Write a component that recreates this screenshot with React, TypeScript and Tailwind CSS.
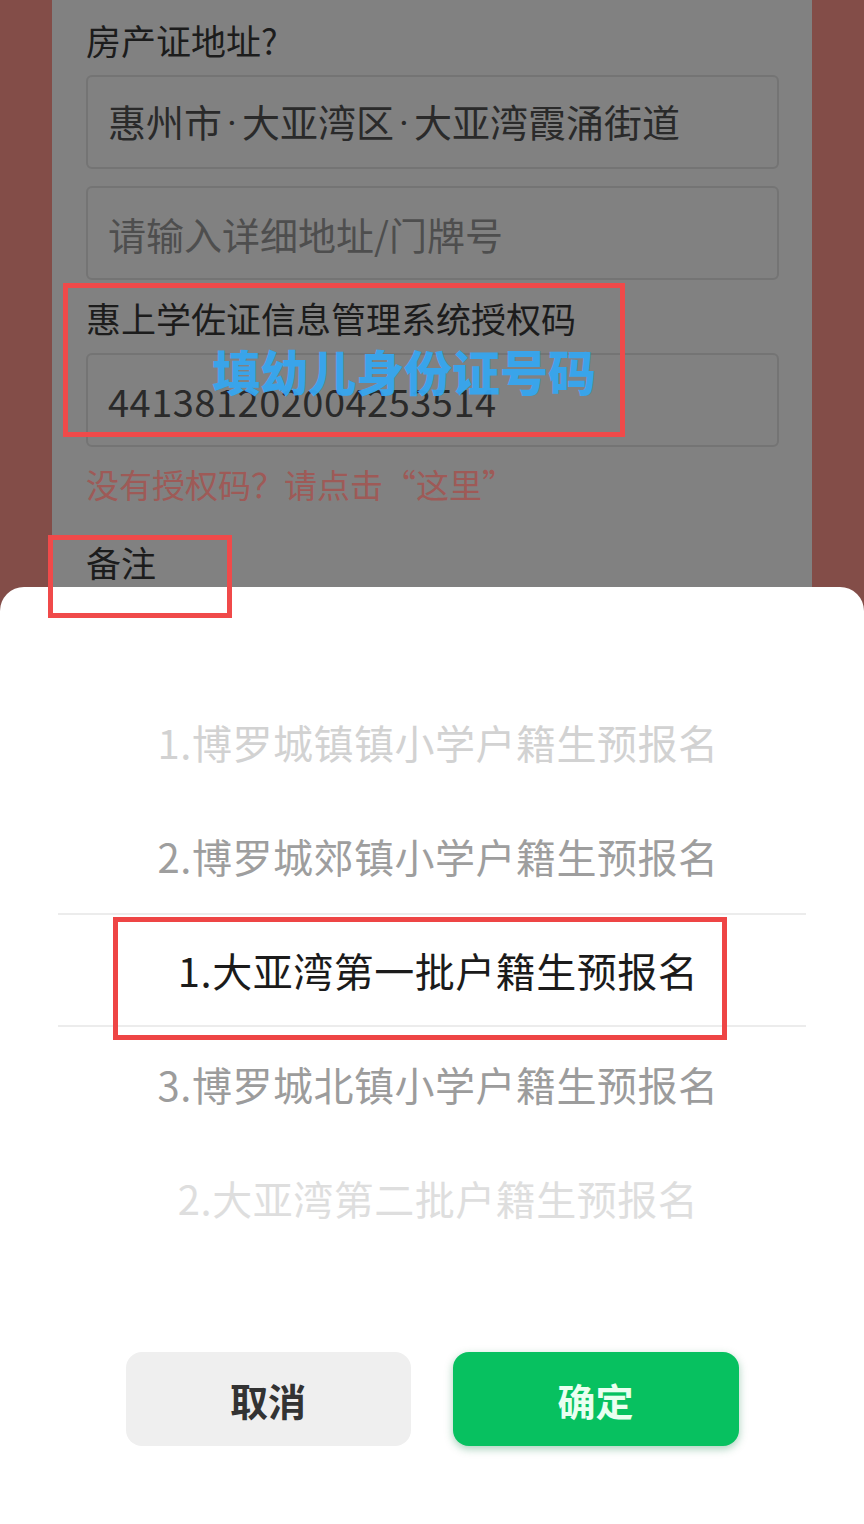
import React from "react";

const F = { fontFamily: '"Noto Sans CJK SC", "Noto Sans", sans-serif' };

function Dot() {
  return (
    <span className="inline-block w-[20px] text-center font-['Roboto',sans-serif]">
      ·
    </span>
  );
}

export default function App() {
  const rows = [
    { t: "1.博罗城镇镇小学户籍生预报名", c: "text-[#d2d2d2]" },
    { t: "2.博罗城郊镇小学户籍生预报名", c: "text-[#9e9e9e]" },
    { t: "1.大亚湾第一批户籍生预报名", c: "text-[#1b1b1b]", sel: true },
    { t: "3.博罗城北镇小学户籍生预报名", c: "text-[#9c9c9c]" },
    { t: "2.大亚湾第二批户籍生预报名", c: "text-[#dedede]" },
  ];
  return (
    <div
      className="relative w-[864px] h-[1524px] overflow-hidden bg-white"
      style={F}
    >
      {/* dimmed form */}
      <div className="flex h-[612px] bg-[#834d48]">
        <div className="w-[52px]" />
        <div className="w-[760px] bg-[#818181] flex flex-col pl-[34px] pr-[33px]">
          <div className="mt-[16px] h-[48px] leading-[48px] text-[35px] text-[#1c1c1c]">
            房产证地址?
          </div>
          <div className="mt-[11px] h-[94px] border-2 border-[#747474] rounded-[6px] flex items-center pl-[20px] text-[38px] text-[#2a2a2a]">
            <span>
              惠州市<Dot />大亚湾区<Dot />大亚湾霞涌街道
            </span>
          </div>
          <div className="mt-[17px] h-[94px] border-2 border-[#747474] rounded-[6px] flex items-center pl-[20px] text-[38px] text-[#4e4e4e]">
            请输入详细地址/门牌号
          </div>
          <div className="mt-[14px] h-[48px] leading-[48px] text-[35px] text-[#1c1c1c]">
            惠上学佐证信息管理系统授权码
          </div>
          <div className="mt-[11px] h-[94px] border-2 border-[#747474] rounded-[6px] flex items-center pl-[20px] text-[38px] tracking-[0.5px] text-[#2a2a2a]">
            441381202004253514
          </div>
          <div className="mt-[15px] h-[44px] leading-[44px] text-[33px] text-[#9e5a57]">
            没有授权码？请点击“这里”
          </div>
          <div className="mt-[32px] h-[48px] leading-[48px] text-[35px] text-[#1c1c1c]">
            备注
          </div>
        </div>
        <div className="flex-1" />
      </div>

      {/* bottom sheet */}
      <div className="relative -mt-[25px] h-[937px] bg-white rounded-t-[24px] pt-[98px] flex flex-col">
        <div className="flex flex-col">
          {rows.map((r, i) => (
            <div
              key={i}
              className={`h-[114px] flex items-center justify-center pl-[12px] text-[40px] leading-none ${r.c} ${
                r.sel ? "mx-[58px] border-y-2 border-[#ececec]" : ""
              }`}
            >
              <span className="tracking-[0.5px]">{r.t}</span>
            </div>
          ))}
        </div>
        <div className="mt-[97px] flex justify-center gap-[42px]">
          <div className="w-[285px] h-[94px] rounded-[16px] bg-[#efefef] flex items-center justify-center text-[38px] font-bold text-[#333333]">
            取消
          </div>
          <div className="w-[286px] h-[94px] rounded-[16px] bg-[#07c160] shadow-[0_3px_8px_rgba(7,120,60,0.35)] flex items-center justify-center text-[38px] font-bold text-[#eafff0]">
            确定
          </div>
        </div>
      </div>

      {/* annotations */}
      <div className="absolute left-[63px] top-[283px] w-[562px] h-[154px] border-[5px] border-[#f04a4a]" />
      <div className="absolute left-[48px] top-[535px] w-[184px] h-[83px] border-[5px] border-[#f04a4a]" />
      <div className="absolute left-[113px] top-[917px] w-[614px] h-[123px] border-[5px] border-[#ee4545]" />
      <div className="absolute left-[212px] top-[342px] h-[56px] leading-[56px] text-[48px] font-black text-[#36a6f0] opacity-95">
        填幼儿身份证号码
      </div>
    </div>
  );
}
